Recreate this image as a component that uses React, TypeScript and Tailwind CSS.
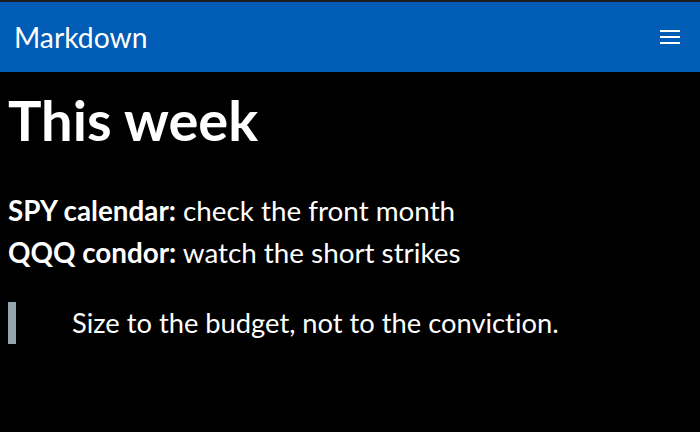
export default function App() {
  return (
    <div
      className="min-h-screen bg-black text-white [font-variant-ligatures:none]"
      style={{ fontFamily: 'Lato, "Noto Sans", sans-serif' }}
    >
      <div className="h-[2px] bg-[#1c1c1c]" />
      <header className="flex h-[70px] items-center justify-between bg-[#005cb5] pl-[14px] pr-[20px]">
        <span className="text-[28.3px] leading-none">Markdown</span>
        <button className="flex w-[20px] flex-col gap-[4px]" aria-label="menu">
          <span className="block h-[2px] w-full bg-white" />
          <span className="block h-[2px] w-full bg-white" />
          <span className="block h-[2px] w-full bg-white" />
        </button>
      </header>
      <main className="px-2">
        <h1 className="mt-[14px] text-[56px] font-bold leading-[1.2]">This week</h1>
        <div className="mt-[37px] text-[27.8px] leading-[42px]">
          <p>
            <strong className="font-bold">SPY calendar:</strong> check the front month
          </p>
          <p>
            <strong className="font-bold">QQQ condor:</strong> watch the short strikes
          </p>
        </div>
        <blockquote className="mt-[28px] border-l-8 border-[#95a5ae] pl-[56px] text-[27.3px] leading-[42px]">
          Size to the budget, not to the conviction.
        </blockquote>
      </main>
    </div>
  );
}
